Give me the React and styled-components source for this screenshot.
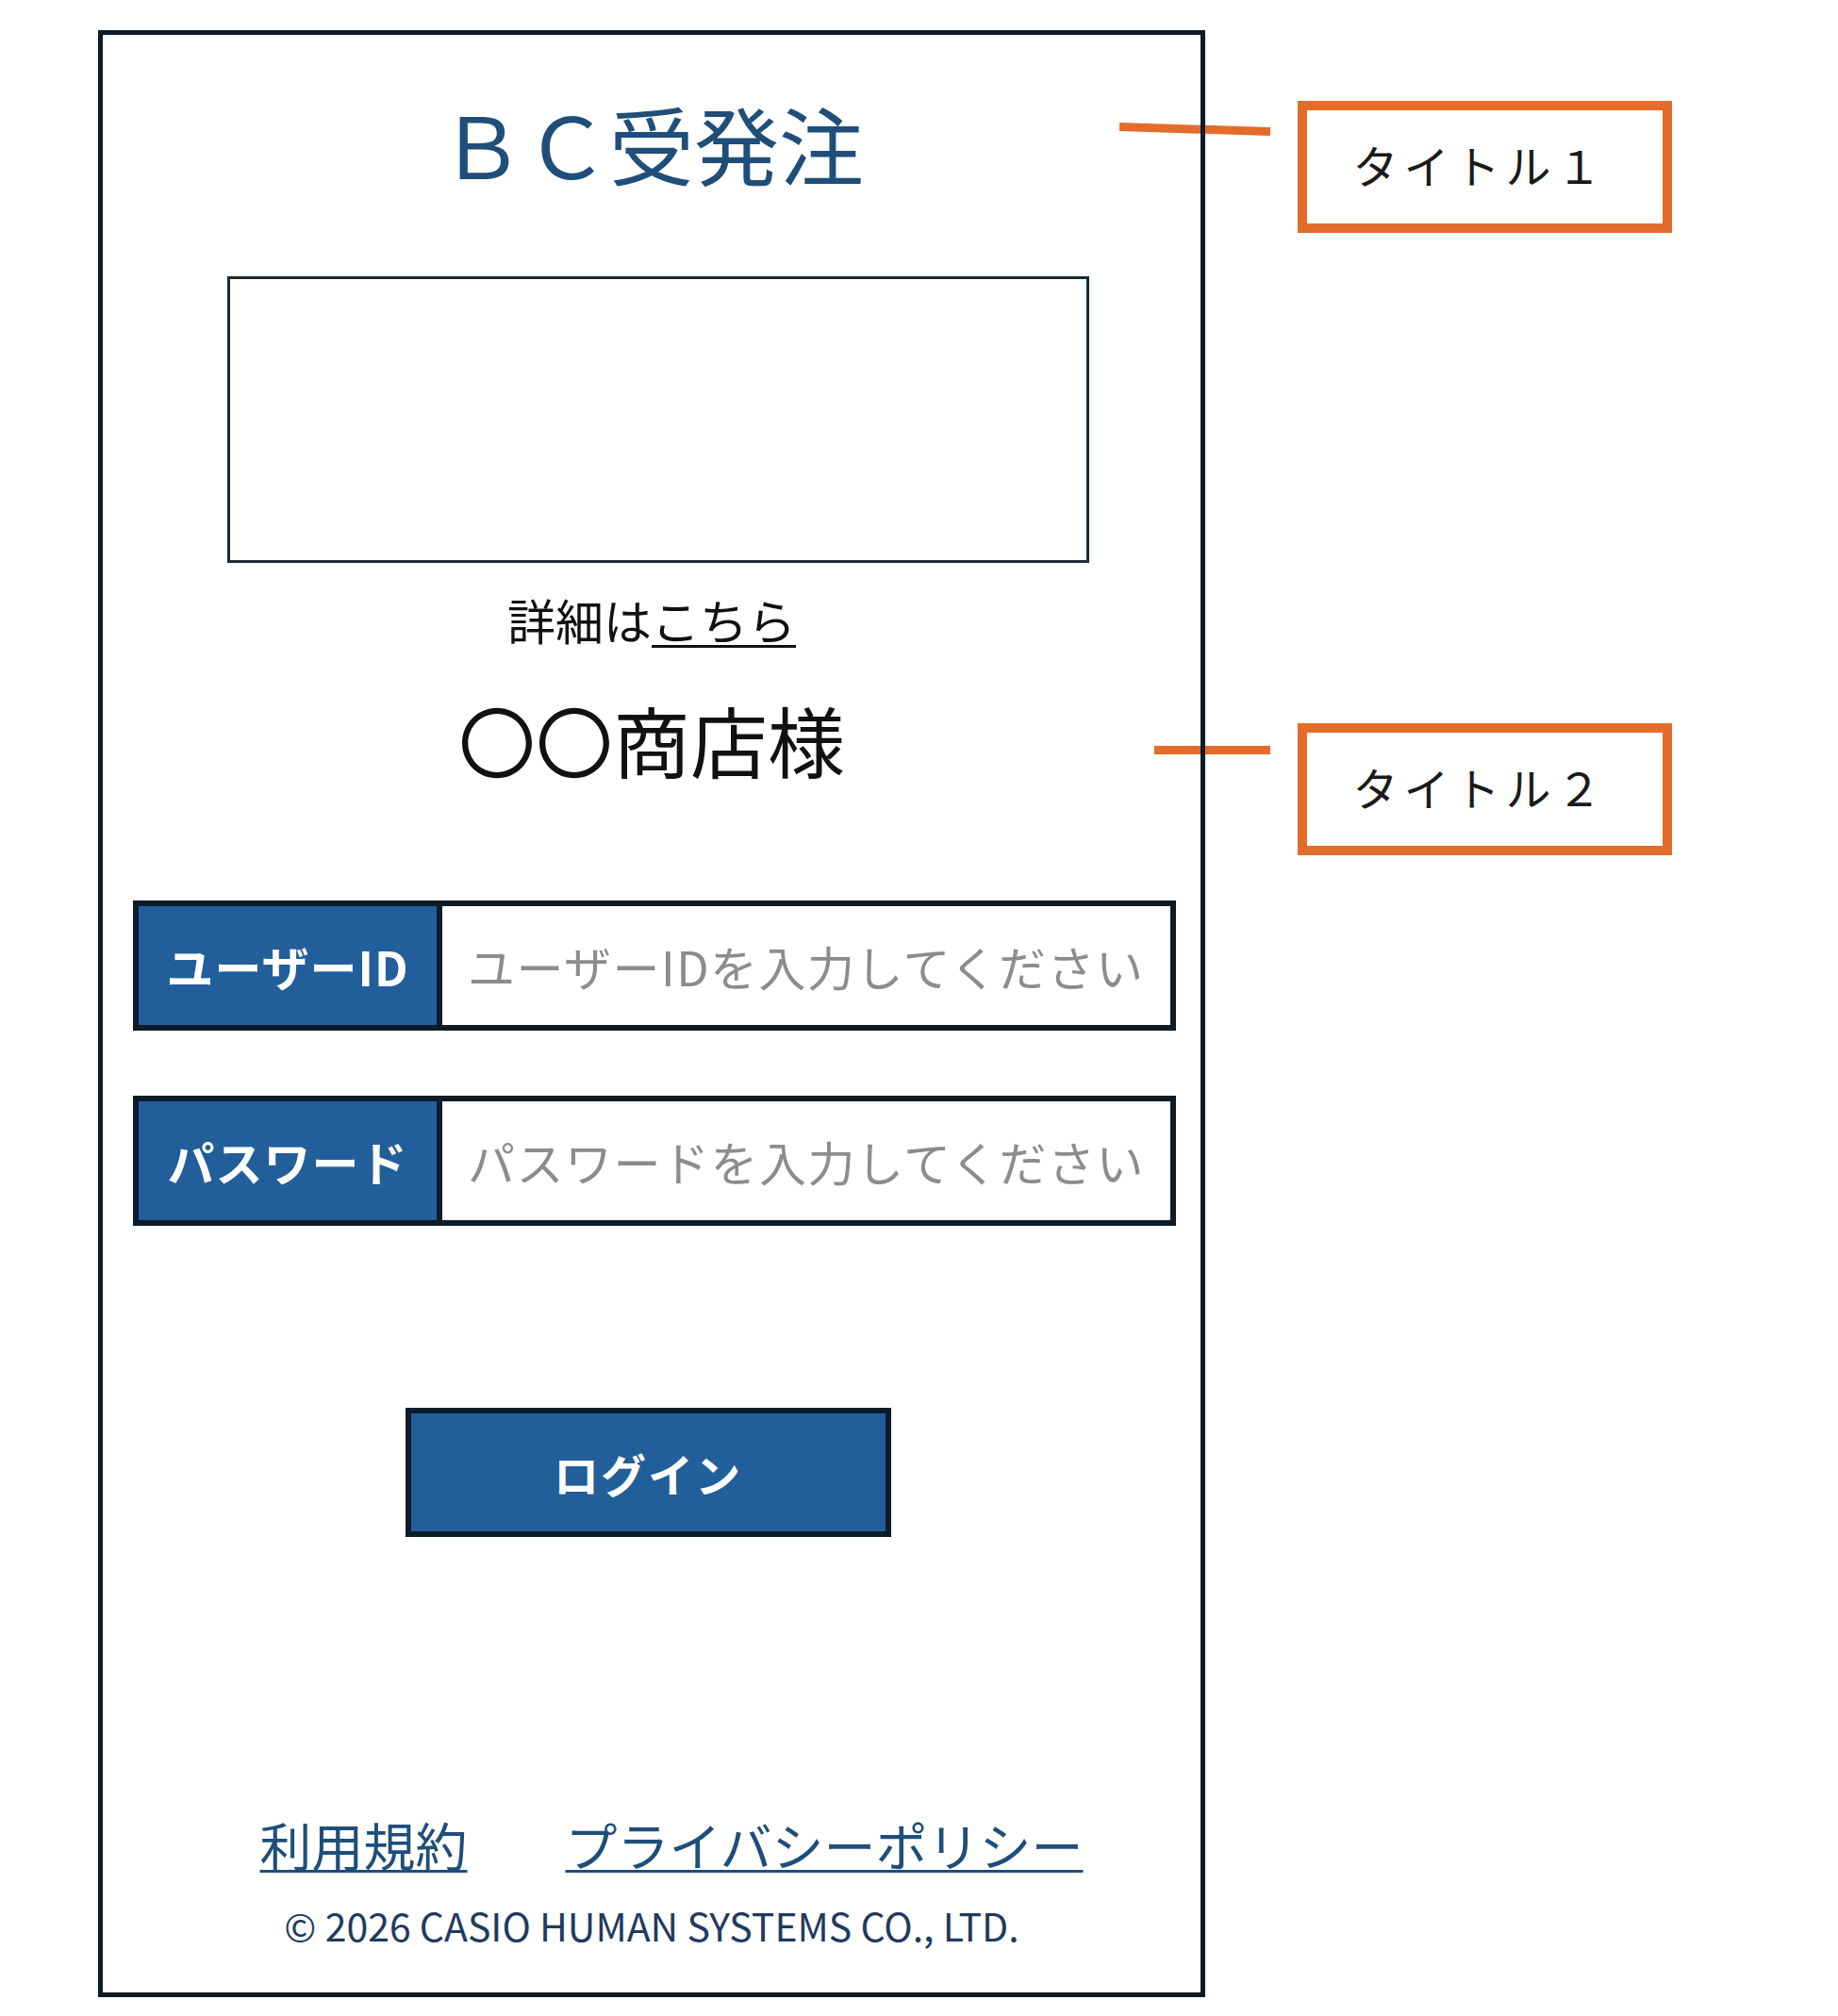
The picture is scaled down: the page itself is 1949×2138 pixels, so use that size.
import React from 'react'
import styled, { createGlobalStyle } from 'styled-components'

const GlobalStyle = createGlobalStyle`
  body {
    margin: 0;
    background: #fff;
    font-family: "Noto Sans CJK JP", "Noto Sans", sans-serif;
  }
`

const NAVY = '#0c1c29'
const BLUE = '#225e9a'
const INK_BLUE = '#1f4e79'
const ORANGE = '#e46c2a'

function Field({ label, placeholder, type = 'text' }) {
  return (
    <FieldRow>
      <FieldLabel>{label}</FieldLabel>
      <FieldInput type={type} placeholder={placeholder} />
    </FieldRow>
  )
}

function Callout({ top, text, lineLeft, lineTop, lineWidth, tilt }) {
  return (
    <>
      <Leader style={{ left: lineLeft, top: lineTop, width: lineWidth, transform: `rotate(${tilt}deg)` }} />
      <CalloutBox style={{ top }}>{text}</CalloutBox>
    </>
  )
}

export default function App() {
  return (
    <Page>
      <GlobalStyle />
      <Callout top={107} text="タイトル１" lineLeft={1187} lineTop={130} lineWidth={160} tilt={1.8} />
      <Callout top={767} text="タイトル２" lineLeft={1224} lineTop={791} lineWidth={123} tilt={0} />
      <Frame>
        <Title>ＢＣ受発注</Title>
        <Banner />
        <Detail>
          詳細は<a href="#detail">こちら</a>
        </Detail>
        <ShopName>〇〇商店様</ShopName>
        <Fields>
          <Field label="ユーザーID" placeholder="ユーザーIDを入力してください" />
          <Field label="パスワード" placeholder="パスワードを入力してください" type="password" />
        </Fields>
        <LoginButton type="button">ログイン</LoginButton>
        <Footer>
          <FooterLinks>
            <a href="#terms">利用規約</a>
            <a href="#privacy">プライバシーポリシー</a>
          </FooterLinks>
          <Copyright>© 2026 CASIO HUMAN SYSTEMS CO., LTD.</Copyright>
        </Footer>
      </Frame>
    </Page>
  )
}

const Page = styled.div`
  position: relative;
  box-sizing: border-box;
  width: 1949px;
  min-height: 2138px;
  padding: 32px 0 0 104px;
`

const Frame = styled.div`
  position: relative;
  box-sizing: border-box;
  width: 1174px;
  height: 2086px;
  border: 5px solid ${NAVY};
  display: flex;
  flex-direction: column;
  align-items: center;
`

const Title = styled.h1`
  margin: 69px 0 0;
  font-size: 90px;
  line-height: 1;
  font-weight: 400;
  color: ${INK_BLUE};
`

const Banner = styled.div`
  box-sizing: border-box;
  width: 914px;
  height: 304px;
  margin: 97px 0 0 14px;
  border: 3px solid #1b2b38;
`

const Detail = styled.p`
  margin: 35px 0 0;
  font-size: 51px;
  line-height: 1;
  color: #111;
  a {
    color: #111;
    text-decoration: underline;
    text-decoration-thickness: 3px;
    text-underline-offset: 5px;
  }
`

const ShopName = styled.h2`
  margin: 60px 0 0;
  font-size: 82px;
  line-height: 1;
  font-weight: 400;
  color: #111;
`

const Fields = styled.div`
  display: flex;
  flex-direction: column;
  gap: 69px;
  margin: 130px 0 0 6px;
`

const FieldRow = styled.label`
  box-sizing: border-box;
  display: flex;
  width: 1106px;
  height: 138px;
  border: 6px solid ${NAVY};
  background: #fff;
`

const FieldLabel = styled.span`
  flex: 0 0 316px;
  display: flex;
  align-items: center;
  justify-content: center;
  border-right: 6px solid ${NAVY};
  background: ${BLUE};
  color: #fff;
  font-size: 50px;
  font-weight: 700;
  letter-spacing: 1px;
`

const FieldInput = styled.input`
  flex: 1;
  min-width: 0;
  border: none;
  outline: none;
  padding: 0 0 0 27px;
  background: #fff;
  font-family: inherit;
  font-size: 50px;
  letter-spacing: 1.5px;
  color: #333;
  &::placeholder {
    color: #8c8c8c;
  }
`

const LoginButton = styled.button`
  box-sizing: border-box;
  width: 515px;
  height: 137px;
  margin: 193px 0 0 -8px;
  border: 6px solid ${NAVY};
  background: ${BLUE};
  color: #fff;
  font-family: inherit;
  font-size: 48px;
  font-weight: 700;
  letter-spacing: 2px;
  cursor: pointer;
`

const Footer = styled.footer`
  margin-top: auto;
  margin-bottom: 51px;
  display: flex;
  flex-direction: column;
  align-items: center;
  gap: 38px;
`

const FooterLinks = styled.nav`
  display: flex;
  gap: 104px;
  margin-left: 42px;
  a {
    font-size: 55px;
    line-height: 1;
    color: ${INK_BLUE};
    text-decoration: underline;
    text-decoration-thickness: 3px;
    text-underline-offset: 4px;
  }
`

const Copyright = styled.small`
  font-size: 41px;
  line-height: 1;
  color: #1f3a60;
`

const Leader = styled.div`
  position: absolute;
  height: 9px;
  background: ${ORANGE};
  transform-origin: left center;
`

const CalloutBox = styled.div`
  position: absolute;
  left: 1376px;
  box-sizing: border-box;
  width: 397px;
  height: 140px;
  border: 10px solid ${ORANGE};
  display: flex;
  align-items: center;
  justify-content: center;
  padding: 0 10px 6px 0;
  font-size: 48px;
  letter-spacing: 6px;
  color: #1a1a1a;
`
